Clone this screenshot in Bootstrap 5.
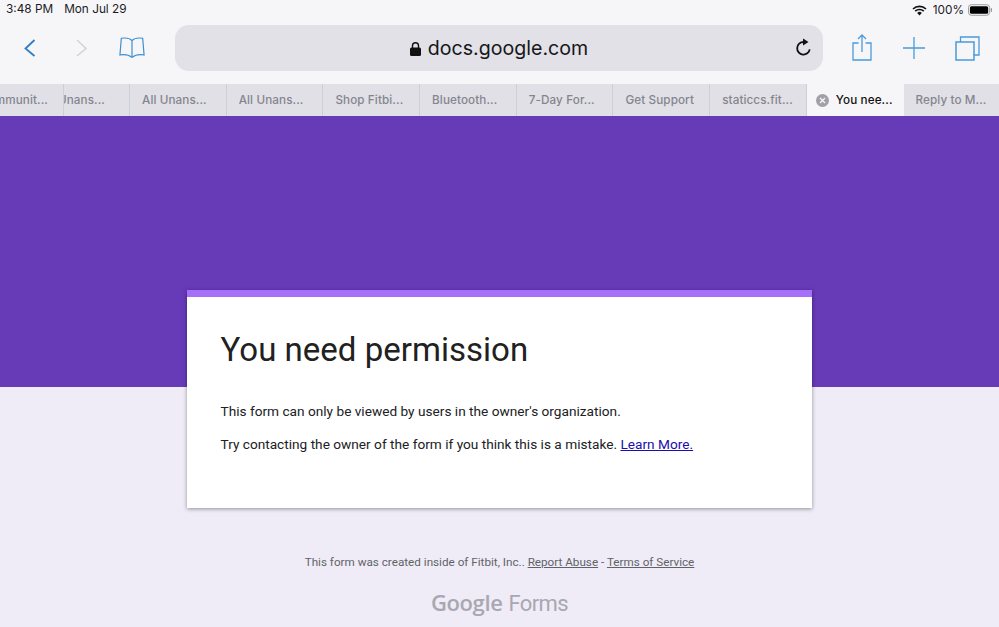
<!DOCTYPE html>
<html lang="en">
<head>
<meta charset="utf-8">
<title>You need permission</title>
<link href="https://cdn.jsdelivr.net/npm/bootstrap@5.3.0/dist/css/bootstrap.min.css" rel="stylesheet">
<style>
html,body{height:627px;overflow:hidden}
body{background:#efecf7;font-family:Roboto,sans-serif;color:#202124}
.chrome-top{background:#f6f6f9;height:84px;font-family:Inter,"Liberation Sans",sans-serif}
.status-row{height:20px;padding:0 6px;font-size:11.8px;line-height:19px;color:#1c1c1e}
.status-date{margin-left:11px}
.status-pct{margin-left:6px;margin-right:4px}
.tool-row{height:64px;padding-top:5px}
.tool-left{width:175px;height:46px;padding-left:23px}
.tool-right{width:176px;height:46px}
.ico-forward{margin-left:39px}
.ico-book{margin-left:31px}
.ico-share{margin-left:29px;margin-top:-2px}
.ico-plus{margin-left:31px}
.ico-tabs{margin-left:30px}
.url-pill{width:648px;height:46px;background:#e1e1e7;border-radius:14px;font-size:19.6px;color:#17171a;position:relative;padding-top:1px}
.url-lock{margin-right:7px}
.url-reload{position:absolute;right:12px;top:13px}
.tab-strip{height:32px;background:#e0e0e6;font-family:Inter,"Liberation Sans",sans-serif;font-size:11.7px;font-weight:500;color:#85858e;letter-spacing:.1px}
.tab-item{height:32px;flex:0 0 auto;width:96.7px;border-right:1px solid #cfcfd6;overflow:hidden;white-space:nowrap;padding-top:1px;padding-left:12px}
.tab-item span{flex-shrink:0}
.tab-first{width:64px;padding-left:0;padding-right:15px}
.tab-second{width:66px;padding-left:0;padding-right:24px}
.tab-current{background:#f6f6f9;color:#111;border-right:0;gap:7px;padding-left:9px}
.tab-last{border-right:0}
.hero-band{height:271px;background:#673ab7}
.notice-panel{width:625px;height:218px;margin:-97px auto 0;background:#fff;border-top:7px solid #a56ffa;box-shadow:0 1px 4px rgba(0,0,0,.4);padding:0 33.500px;position:relative}
.notice-title{font-size:33px;font-weight:400;line-height:40px;margin:33px 0 31px;color:#212121;letter-spacing:.02px}
.notice-text{font-size:13.660px;line-height:20px;margin:0 0 13px;color:#202124}
.notice-text a{color:#1a0dab}
.foot-line{font-size:11.700px;line-height:16px;color:#5f6368;margin-top:46px;text-align:center}
.foot-line a{color:#5f6368}
.brand-line{margin-top:17px;line-height:30px;color:#a8a8b0;text-align:center;font-size:22px}
.brand-g{font-family:"Open Sans",sans-serif;font-weight:600;letter-spacing:-.4px;margin-right:6px}
.brand-f{font-family:Roboto,sans-serif;font-weight:400;letter-spacing:-.6px}
</style>
</head>
<body>
<header class="chrome-top">
  <div class="status-row d-flex justify-content-between">
    <div><span>3:48 PM</span><span class="status-date">Mon Jul 29</span></div>
    <div class="d-flex align-items-center">
      <svg width="15" height="11" viewBox="0 0 15 11"><path d="M1 4a9.500 9.500 0 0 1 13 0M3.200 6.200a6.300 6.300 0 0 1 8.600 0" fill="none" stroke="#111" stroke-width="1.700"/><path d="M5.200 7.900a3.300 3.300 0 0 1 4.600 0L7.500 10.400z" fill="#111"/></svg>
      <span class="status-pct">100%</span>
      <svg width="25" height="12" viewBox="0 0 26 12"><rect x=".5" y=".5" width="22" height="11" rx="3" fill="none" stroke="#999"/><rect x="2" y="2" width="19" height="8" rx="1.600" fill="#000"/><rect x="23.600" y="4" width="1.400" height="4" rx=".7" fill="#999"/></svg>
    </div>
  </div>
  <div class="tool-row d-flex align-items-start">
    <div class="tool-left d-flex align-items-center">
      <svg width="13" height="20" viewBox="0 0 13 20"><path d="M11.500 2 2.500 10.500 11.500 18" fill="none" stroke="#2f7fc4" stroke-width="1.800"/></svg>
      <svg class="ico-forward" width="13" height="20" viewBox="0 0 13 20"><path d="M2 2l9 8.500L2 18" fill="none" stroke="#d3d3d8" stroke-width="1.600"/></svg>
      <svg class="ico-book" width="26" height="24" viewBox="0 0 28 25"><path d="M14 4.500C11.500 1.800 6 1.500 2.500 2L1 20c4.500-.7 9.500-.3 12.300 2.300h1.400C17.500 19.700 22.500 19.300 27 20L25.500 2C22 1.500 16.500 1.800 14 4.500zM14 4.500V22" fill="none" stroke="#3f8fd0" stroke-width="1.300"/></svg>
    </div>
    <div class="url-pill d-flex align-items-center justify-content-center">
      <svg class="url-lock" width="11" height="14" viewBox="0 0 11 14"><path d="M2.500 6V3.800a3 3 0 0 1 6 0V6" fill="none" stroke="#111" stroke-width="1.400"/><rect y="5.500" width="11" height="8.500" rx="1.500" fill="#111"/></svg>
      <span>docs.google.com</span>
      <svg class="url-reload" width="16" height="19" viewBox="0 0 16 19"><path d="M8.500 4a6.300 6.300 0 1 0 6.200 7.300" fill="none" stroke="#111" stroke-width="1.800"/><path d="M8 .5l5.500 3.500L8 7.500z" fill="#111"/></svg>
    </div>
    <div class="tool-right d-flex align-items-center">
      <svg class="ico-share" width="20" height="27" viewBox="0 0 20 27"><path d="M6.500 9H1v17h18V9h-5.500M10 18V1.500M6 5l4-4 4 4" fill="none" stroke="#4a9bdc" stroke-width="1.300"/></svg>
      <svg class="ico-plus" width="22" height="22" viewBox="0 0 22 22"><path d="M0 11h22M11 0v22" fill="none" stroke="#4a9bdc" stroke-width="1.300"/></svg>
      <svg class="ico-tabs" width="25" height="25" viewBox="0 0 25 25"><path d="M5.500 6V1h18.500v18h-5.500" fill="none" stroke="#4a9bdc" stroke-width="1.300"/><rect x="1" y="6" width="18" height="18" fill="none" stroke="#4a9bdc" stroke-width="1.500"/></svg>
    </div>
  </div>
</header>
<nav class="tab-strip d-flex">
  <div class="tab-item tab-first d-flex align-items-center justify-content-end"><span>Communit...</span></div>
  <div class="tab-item tab-second d-flex align-items-center justify-content-end"><span>Unans...</span></div>
  <div class="tab-item d-flex align-items-center"><span>All Unans...</span></div>
  <div class="tab-item d-flex align-items-center"><span>All Unans...</span></div>
  <div class="tab-item d-flex align-items-center"><span>Shop Fitbi...</span></div>
  <div class="tab-item d-flex align-items-center"><span>Bluetooth...</span></div>
  <div class="tab-item d-flex align-items-center"><span>7-Day For...</span></div>
  <div class="tab-item d-flex align-items-center"><span>Get Support</span></div>
  <div class="tab-item d-flex align-items-center"><span>staticcs.fit...</span></div>
  <div class="tab-item tab-current d-flex align-items-center">
    <svg width="13" height="13" viewBox="0 0 13 13"><circle cx="6.500" cy="6.500" r="6.500" fill="#a0a0a6"/><path d="M4 4l5 5M9 4l-5 5" stroke="#f6f6f9" stroke-width="1.300"/></svg>
    <span>You nee...</span>
  </div>
  <div class="tab-item tab-last d-flex align-items-center"><span>Reply to M...</span></div>
</nav>
<div class="hero-band"></div>
<main class="notice-panel">
  <h1 class="notice-title">You need permission</h1>
  <p class="notice-text">This form can only be viewed by users in the owner's organization.</p>
  <p class="notice-text">Try contacting the owner of the form if you think this is a mistake. <a href="#">Learn More.</a></p>
</main>
<footer>
  <div class="foot-line">This form was created inside of Fitbit, Inc.. <a href="#">Report Abuse</a> - <a href="#">Terms of Service</a></div>
  <div class="brand-line"><span class="brand-g">Google</span><span class="brand-f">Forms</span></div>
</footer>
</body>
</html>
